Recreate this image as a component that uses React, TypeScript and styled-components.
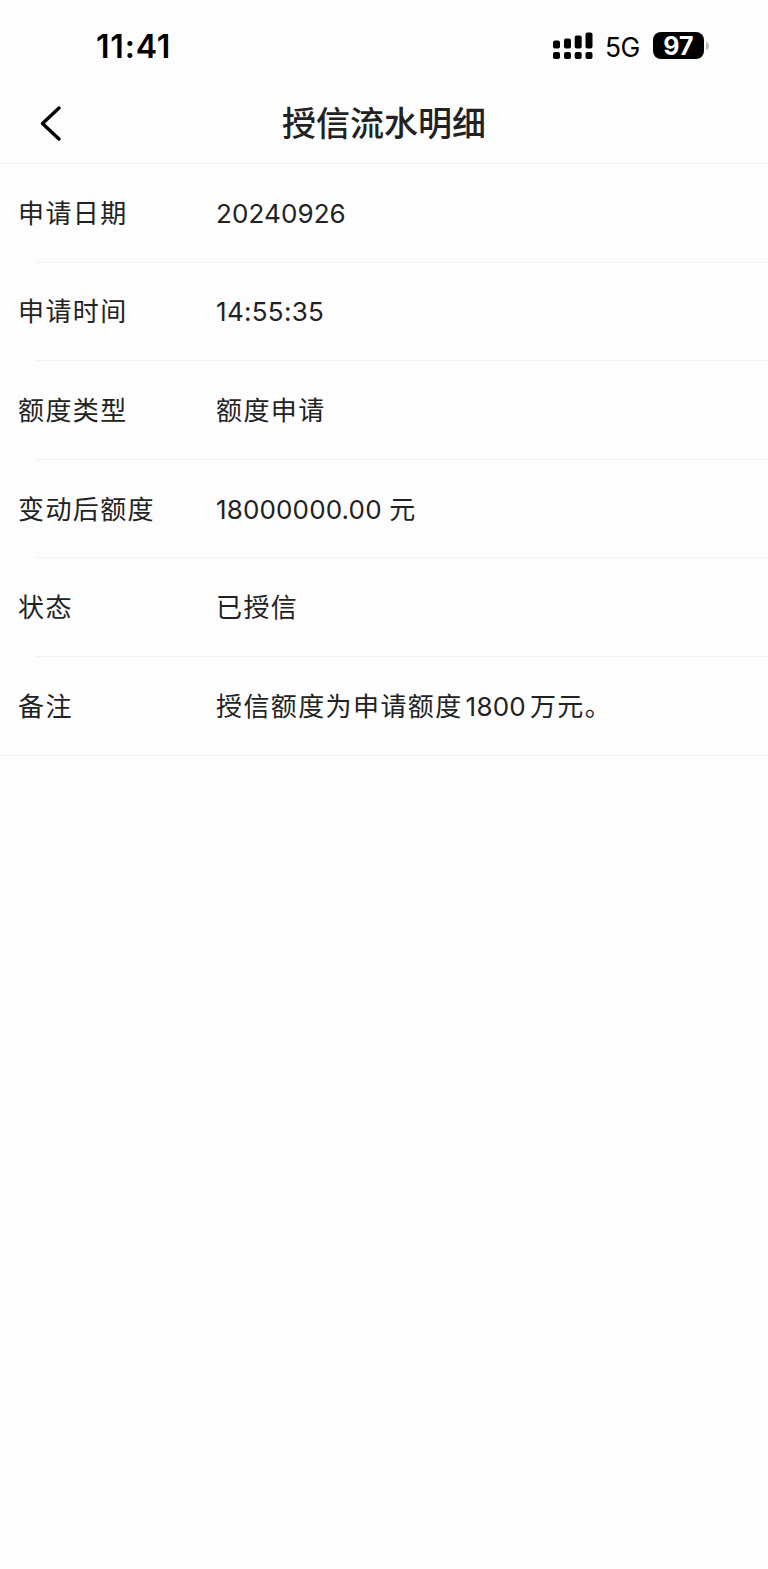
import React from "react";
import styled, { createGlobalStyle } from "styled-components";

const GlobalStyle = createGlobalStyle`
  * {
    box-sizing: border-box;
  }

  body {
    margin: 0;
    background: #fdfdfd;
    color: #222;
    font-family: Inter, "Noto Sans CJK SC", sans-serif;
  }
`;

const Page = styled.div`
  display: flex;
  flex-direction: column;
  min-height: 1569px;
`;

const StatusBar = styled.div`
  display: flex;
  align-items: center;
  justify-content: space-between;
  height: 84px;
  padding: 7px 58px 0 96px;
  color: #000;
`;

const Clock = styled.span`
  padding-top: 2px;
  font-size: 32px;
  font-weight: 600;
  line-height: 40px;
  letter-spacing: 0.8px;
`;

const StatusIcons = styled.div`
  display: flex;
  align-items: center;
`;

const Network = styled.span`
  margin: 3px 13px 0 12px;
  font-size: 26.5px;
  line-height: 32px;
  letter-spacing: -0.4px;
`;

const Battery = styled.div`
  display: flex;
  align-items: center;
`;

const BatteryBody = styled.div`
  width: 51px;
  height: 27px;
  padding-top: 1px;
  border-radius: 8px;
  background: #000;
  color: #fff;
  font-size: 25px;
  font-weight: 700;
  line-height: 27px;
  text-align: center;
`;

const NavBar = styled.header`
  display: grid;
  grid-template-columns: 100px 1fr 100px;
  align-items: center;
  height: 80px;
  border-bottom: 1px solid #f2f2f2;
`;

const BackButton = styled.button`
  display: flex;
  padding: 0 0 1px 38px;
  border: none;
  background: none;
  cursor: pointer;
`;

const Title = styled.h1`
  margin: 0;
  font-size: 34px;
  font-weight: 500;
  line-height: 48px;
  text-align: center;
`;

const DetailList = styled.dl`
  margin: 0;
`;

const Row = styled.div`
  display: flex;
  flex-direction: column;
  height: 98.6px;

  /* inset divider, full width under the last row */
  &::after {
    content: "";
    height: 1px;
    margin-left: 36px;
    background: #f2f2f2;
  }

  &:last-child::after {
    margin-left: 0;
  }
`;

const RowContent = styled.div`
  display: flex;
  flex: 1;
  align-items: center;
  padding: 2px 18px 0;
`;

const Label = styled.dt`
  width: 198px;
  font-size: 26px;
  line-height: 38px;
  letter-spacing: 1.4px;
`;

const Value = styled.dd<{ $spacing?: number }>`
  margin: 0;
  font-size: 26px;
  line-height: 38px;
  letter-spacing: ${({ $spacing = 1.4 }) => $spacing}px;
  white-space: nowrap;
`;

const Digits = styled.span`
  margin: 0 4px 0 3px;
  letter-spacing: 0.2px;
`;

interface DetailItem {
  label: string;
  value: React.ReactNode;
  spacing?: number;
}

const details: DetailItem[] = [
  { label: "申请日期", value: "20240926", spacing: 0.1 },
  { label: "申请时间", value: "14:55:35", spacing: 0.3 },
  { label: "额度类型", value: "额度申请" },
  { label: "变动后额度", value: "18000000.00 元", spacing: 0.15 },
  { label: "状态", value: "已授信" },
  {
    label: "备注",
    value: (
      <>
        授信额度为申请额度<Digits>1800</Digits>万元。
      </>
    ),
  },
];

const SignalIcon: React.FC = () => (
  <svg width="40" height="28" viewBox="0 0 40 28">
    <rect x="0" y="8.5" width="7" height="8" rx="2" />
    <rect x="11" y="6.500" width="7" height="10" rx="2" />
    <rect x="21.700" y="3.5" width="7" height="13" rx="2" />
    <rect x="32.500" y="0.5" width="7" height="16" rx="2" />
    <rect x="0" y="20" width="7" height="7" rx="2" />
    <rect x="11" y="20" width="7" height="7" rx="2" />
    <rect x="21.700" y="20" width="7" height="7" rx="2" />
    <rect x="32.500" y="20" width="7" height="7" rx="2" />
  </svg>
);

const App: React.FC = () => {
  return (
    <Page>
      <GlobalStyle />

      {/* Phone status bar */}
      <StatusBar>
        <Clock>11:41</Clock>
        <StatusIcons>
          <SignalIcon />
          <Network>5G</Network>
          <Battery>
            <BatteryBody>97</BatteryBody>
            <svg width="6" height="10" viewBox="0 0 6 10">
              <path d="M2 1C6 2 6 8 2 9Z" fill="#bbb" />
            </svg>
          </Battery>
        </StatusIcons>
      </StatusBar>

      <NavBar>
        <BackButton aria-label="返回">
          <svg width="26" height="38" viewBox="0 0 26 38" fill="none">
            <path
              d="M21 4 4.500 19.500 21 35"
              stroke="#000"
              strokeWidth="3.4"
              strokeLinecap="round"
              strokeLinejoin="round"
            />
          </svg>
        </BackButton>
        <Title>授信流水明细</Title>
      </NavBar>

      {/* Credit record details */}
      <DetailList>
        {details.map((item) => (
          <Row key={item.label}>
            <RowContent>
              <Label>{item.label}</Label>
              <Value $spacing={item.spacing}>{item.value}</Value>
            </RowContent>
          </Row>
        ))}
      </DetailList>
    </Page>
  );
};

export default App;
